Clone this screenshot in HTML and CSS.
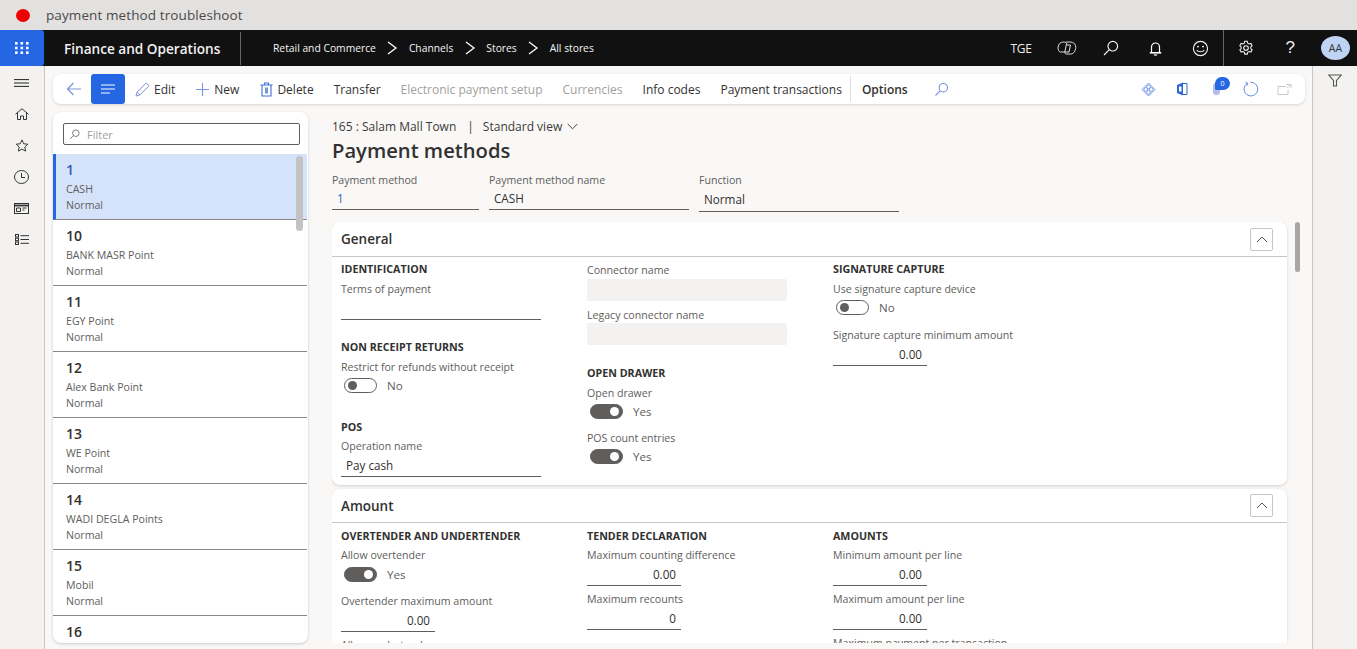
FILE: index.html
```html
<!DOCTYPE html>
<html lang="en">
<head>
<meta charset="utf-8">
<title>Payment methods</title>
<link rel="stylesheet" href="styles.css">
</head>
<body>
<div class="page">
  <div class="tabbar"><span class="dot"></span><span class="tabtitle">payment method troubleshoot</span></div>
  <header class="nav">
    <div class="waffle">
      <svg width="16" height="14" viewBox="0 0 16 14" fill="#fff"><rect x="1" y="1" width="2.6" height="2.6"/><rect x="6.5" y="1" width="2.6" height="2.6"/><rect x="12" y="1" width="2.6" height="2.6"/><rect x="1" y="5.7" width="2.6" height="2.6"/><rect x="6.5" y="5.7" width="2.6" height="2.6"/><rect x="12" y="5.7" width="2.6" height="2.6"/><rect x="1" y="10.4" width="2.6" height="2.6"/><rect x="6.5" y="10.4" width="2.6" height="2.6"/><rect x="12" y="10.4" width="2.6" height="2.6"/></svg>
    </div>
    <div class="brand">Finance and Operations</div>
    <nav class="crumbs">
      <span>Retail and Commerce</span>
      <svg class="chev" width="12" height="14" viewBox="0 0 12 14"><path d="M2 1l8 6-8 6" fill="none" stroke="#fff" stroke-width="1.300"/></svg>
      <span>Channels</span>
      <svg class="chev" width="12" height="14" viewBox="0 0 12 14"><path d="M2 1l8 6-8 6" fill="none" stroke="#fff" stroke-width="1.300"/></svg>
      <span>Stores</span>
      <svg class="chev" width="12" height="14" viewBox="0 0 12 14"><path d="M2 1l8 6-8 6" fill="none" stroke="#fff" stroke-width="1.300"/></svg>
      <span>All stores</span>
    </nav>
    <div class="navright">
      <span class="company">TGE</span>
      <span class="navicon"><svg width="20" height="14" viewBox="0 0 20 14" fill="none" stroke="#e0e0e0" stroke-width="1"><path d="M6.500 1C3.500 1 1.500 3 1.100 6c-.3 2.500.6 5 2.400 5h4.300L9.500 3c.3-1.200-1-2-3-2z"/><path d="M9 1h4.500c3 0 5.500 2.500 5.300 5.500-.2 3-2 6.500-5 6.500H9.500c-1.300 0-1.900-.8-1.700-2"/><path d="M9.500 4h4l-1.500 7H7.800"/></svg></span>
      <span class="navicon"><svg width="16" height="16" viewBox="0 0 16 16" fill="none" stroke="#f2f2f2" stroke-width="1.200"><circle cx="9.800" cy="6.200" r="4.800"/><path d="M6.300 9.700L1 15"/></svg></span>
      <span class="navicon"><svg width="13" height="15" viewBox="0 0 13 15" fill="none" stroke="#fff" stroke-width="1.200"><path d="M2.500 11.500V6a4 4 0 0 1 8 0v5.500"/><path d="M.8 11.800h11.400" stroke-width="1.600"/><path d="M5 13.500c.4.800 2.600.8 3 0"/></svg></span>
      <span class="navicon"><svg width="17" height="17" viewBox="0 0 18 18" fill="none" stroke="#f2f2f2" stroke-width="1.200"><circle cx="9" cy="9" r="7.500"/><circle cx="6.300" cy="7" r="1" fill="#f2f2f2" stroke="none"/><circle cx="11.700" cy="7" r="1" fill="#f2f2f2" stroke="none"/><path d="M5 10.500c1.500 2.600 6.500 2.600 8 0"/></svg></span>
      <span class="navsep"></span>
      <span class="navicon"><svg width="16" height="16" viewBox="0 0 18 18" fill="none" stroke="#f2f2f2" stroke-width="1.200"><path d="M7.600 1.500h2.800l.5 2.100 1.600.9 2-.6 1.400 2.400-1.500 1.500v1.800l1.500 1.500-1.400 2.400-2-.6-1.600.9-.5 2.100H7.600l-.5-2.100-1.600-.9-2 .6-1.400-2.400 1.500-1.500V8.200L2.100 6.300l1.400-2.400 2 .6 1.600-.9z"/><circle cx="9" cy="9" r="2.600"/></svg></span>
      <span class="navicon help">?</span>
      <span class="avatar">AA</span>
    </div>
  </header>
  <div class="body">
    <aside class="rail">
      <span class="slot"><svg width="15" height="8" viewBox="0 0 15 8" stroke="#222" stroke-width="1"><path d="M0 .6h15M0 4h15M0 7.400h15"/></svg></span>
      <span class="slot"><svg width="14" height="12" viewBox="0 0 14 12" fill="none" stroke="#333" stroke-width="1"><path d="M.5 6.300L7 .7l6.500 5.600"/><path d="M2.500 5v6.500h3V8h3v3.500h3V5"/></svg></span>
      <span class="slot"><svg width="14" height="13" viewBox="0 0 16 15" fill="none" stroke="#333" stroke-width="1.100"><path d="M8 1l2 4.500 4.700.5-3.500 3.200 1 4.800L8 11.600l-4.200 2.400 1-4.800L1.300 6 6 5.500z"/></svg></span>
      <span class="slot"><svg width="15" height="14" viewBox="0 0 15 14" fill="none" stroke="#333" stroke-width="1"><ellipse cx="7.500" cy="7" rx="7" ry="6.500"/><path d="M7.500 3v4.500h3.500"/></svg></span>
      <span class="slot"><svg width="15" height="11" viewBox="0 0 15 11" fill="none" stroke="#333" stroke-width="1"><rect x=".5" y=".5" width="14" height="10"/><path d="M.5 2.500h14" stroke-width="1.800"/><path d="M2.500 5h4v3.500h-4zM8.500 5h4M8.500 7h2"/></svg></span>
      <span class="slot"><svg width="14" height="11" viewBox="0 0 14 11" fill="none" stroke="#333" stroke-width="1"><rect x=".5" y=".5" width="3" height="2.500"/><rect x=".5" y="4.200" width="3" height="2.500"/><rect x=".5" y="8" width="3" height="2.500"/><path d="M5.500 1.700H14M5.500 5.500H14M5.500 9.300H14"/></svg></span>
    </aside>
    <main class="workspace">
      <div class="toolbar">
        <span class="tool back"><svg width="16" height="14" viewBox="0 0 16 14" fill="none" stroke="#7b93d8" stroke-width="1.200"><path d="M15 7H1.500M7.500 1L1.500 7l6 6"/></svg></span>
        <span class="listbtn"><svg width="16" height="10" viewBox="0 0 16 10" stroke="#fff" stroke-width="1.200"><path d="M1 1h14M1 5h14M1 9h9"/></svg></span>
        <span class="tool"><svg width="15" height="15" viewBox="0 0 15 15" fill="none" stroke="#7b93d8" stroke-width="1"><path d="M1 14l1-3.800L11.200 1l2.800 2.800L4.800 13z"/><path d="M2 10.200L4.800 13"/></svg>Edit</span>
        <span class="tool new"><svg width="15" height="15" viewBox="0 0 15 15" stroke="#7b93d8" stroke-width="1.100"><path d="M7.500 1v13M1 7.500h13"/></svg>New</span>
        <span class="tool"><svg width="13" height="15" viewBox="0 0 13 15" fill="none" stroke="#3f6fd8" stroke-width="1.100"><path d="M2 3.500V14h9V3.500M.5 3h12M4.500 3V1h4v2"/><rect x="5" y="5.500" width="3" height="6" fill="#7b93d8" stroke="none"/></svg>Delete</span>
        <span class="tool">Transfer</span>
        <span class="tool off">Electronic payment setup</span>
        <span class="tool off">Currencies</span>
        <span class="tool">Info codes</span>
        <span class="tool">Payment transactions</span>
        <span class="toolsep"></span>
        <span class="tool options">Options</span>
        <span class="tool"><svg width="15" height="15" viewBox="0 0 15 15" fill="none" stroke="#7b93d8" stroke-width="1.100"><circle cx="9.300" cy="5.700" r="4.200"/><path d="M6.300 8.700L1.500 13.500"/></svg></span>
        <div class="toolright">
          <svg width="15" height="15" viewBox="0 0 15 15" fill="none" stroke="#6f92e4" stroke-width=".9"><path d="M7.500 1l6.500 6.500L7.500 14 1 7.500z"/><circle cx="7.500" cy="4.800" r="1.900" fill="#fff"/><circle cx="7.500" cy="10.200" r="1.900" fill="#fff"/><circle cx="4.800" cy="7.500" r="1.900" fill="#fff"/><circle cx="10.200" cy="7.500" r="1.900" fill="#fff"/></svg>
          <svg width="12" height="14" viewBox="0 0 12 14"><path d="M1 3l6-2.500v13L1 11z" fill="#2f66d0"/><path d="M7 1.500h4v11H7" fill="none" stroke="#2f66d0"/><path d="M3 4.500h2.500v5H3z" fill="#fff"/></svg>
          <span class="attach"><svg width="10" height="14" viewBox="0 0 10 14"><rect x="1" y="1" width="7" height="12" rx="3" fill="#b5bdea"/></svg><span class="badge">0</span></span>
          <svg class="refresh" width="16" height="16" viewBox="0 0 16 16" fill="none" stroke="#5f86e2" stroke-width="1"><path d="M4.500 2.200a6.800 6.800 0 1 0 3-.9"/><path d="M2.500 1.200l2.300 1.200-1 2.200"/></svg>
          <svg class="popout" width="15" height="13" viewBox="0 0 15 13" fill="none" stroke="#c8c8c8" stroke-width="1"><path d="M9 3.500H1v8h10V7M9.500 1.500H14V5M14 1.500L10 5"/></svg>
        </div>
      </div>
      <div class="split">
        <section class="listpanel">
          <div class="filterwrap">
            <div class="filter"><svg width="11" height="11" viewBox="0 0 15 15" fill="none" stroke="#777" stroke-width="1.300"><circle cx="9.300" cy="5.700" r="4.500"/><path d="M6 9L1.500 13.500"/></svg><span>Filter</span></div>
          </div>
          <div class="items">
            <div class="item active"><div class="num">1</div><div class="sub">CASH</div><div class="sub">Normal</div></div>
            <div class="item"><div class="num">10</div><div class="sub">BANK MASR Point</div><div class="sub">Normal</div></div>
            <div class="item"><div class="num">11</div><div class="sub">EGY Point</div><div class="sub">Normal</div></div>
            <div class="item"><div class="num">12</div><div class="sub">Alex Bank Point</div><div class="sub">Normal</div></div>
            <div class="item"><div class="num">13</div><div class="sub">WE Point</div><div class="sub">Normal</div></div>
            <div class="item"><div class="num">14</div><div class="sub">WADI DEGLA Points</div><div class="sub">Normal</div></div>
            <div class="item"><div class="num">15</div><div class="sub">Mobil</div><div class="sub">Normal</div></div>
            <div class="item"><div class="num">16</div></div>
          </div>
          <div class="listthumb"></div>
        </section>
        <section class="detail">
          <div class="viewline"><span>165 : Salam Mall Town</span><span class="pipe">|</span><span>Standard view</span><svg width="11" height="7" viewBox="0 0 11 7" fill="none" stroke="#444" stroke-width="1"><path d="M.7 1l4.800 4.800L10.300 1"/></svg></div>
          <h1 class="title">Payment methods</h1>
          <div class="headfields">
            <div class="hf w148"><div class="lbl">Payment method</div><div class="inp short link">1</div></div>
            <div class="hf w200"><div class="lbl">Payment method name</div><div class="inp short">CASH</div></div>
            <div class="hf w200"><div class="lbl">Function</div><div class="inp fn">Normal</div></div>
          </div>
          <div class="scroller">
            <article class="card general">
              <div class="cardhead"><span>General</span><span class="collapse"><svg width="12" height="7" viewBox="0 0 12 7" fill="none" stroke="#555" stroke-width="1"><path d="M1 6l5-5 5 5"/></svg></span></div>
              <div class="cols">
                <div class="col">
                  <div class="sect">IDENTIFICATION</div>
                  <div class="lbl m4">Terms of payment</div>
                  <div class="inp wide"></div>
                  <div class="sect m19">NON RECEIPT RETURNS</div>
                  <div class="lbl m4">Restrict for refunds without receipt</div>
                  <div class="toggle"><span class="sw"></span>No</div>
                  <div class="sect m24">POS</div>
                  <div class="lbl m3">Operation name</div>
                  <div class="inp wide">Pay cash</div>
                </div>
                <div class="col">
                  <div class="lbl m1">Connector name</div>
                  <div class="ro m1"></div>
                  <div class="lbl m6">Legacy connector name</div>
                  <div class="ro"></div>
                  <div class="sect m20">OPEN DRAWER</div>
                  <div class="lbl m4">Open drawer</div>
                  <div class="toggle"><span class="sw on"></span>Yes</div>
                  <div class="lbl m9">POS count entries</div>
                  <div class="toggle"><span class="sw on"></span>Yes</div>
                </div>
                <div class="col">
                  <div class="sect">SIGNATURE CAPTURE</div>
                  <div class="lbl m4">Use signature capture device</div>
                  <div class="toggle"><span class="sw"></span>No</div>
                  <div class="lbl m10">Signature capture minimum amount</div>
                  <div class="inp numb">0.00</div>
                </div>
              </div>
            </article>
            <article class="card amount">
              <div class="cardhead"><span>Amount</span><span class="collapse"><svg width="12" height="7" viewBox="0 0 12 7" fill="none" stroke="#555" stroke-width="1"><path d="M1 6l5-5 5 5"/></svg></span></div>
              <div class="cols">
                <div class="col">
                  <div class="sect">OVERTENDER AND UNDERTENDER</div>
                  <div class="lbl m3">Allow overtender</div>
                  <div class="toggle t1"><span class="sw on"></span>Yes</div>
                  <div class="lbl m9">Overtender maximum amount</div>
                  <div class="inp numb">0.00</div>
                  <div class="lbl m5">Allow undertender</div>
                </div>
                <div class="col">
                  <div class="sect">TENDER DECLARATION</div>
                  <div class="lbl m3">Maximum counting difference</div>
                  <div class="inp numb">0.00</div>
                  <div class="lbl m5">Maximum recounts</div>
                  <div class="inp numb">0</div>
                </div>
                <div class="col">
                  <div class="sect">AMOUNTS</div>
                  <div class="lbl m3">Minimum amount per line</div>
                  <div class="inp numb">0.00</div>
                  <div class="lbl m5">Maximum amount per line</div>
                  <div class="inp numb">0.00</div>
                  <div class="lbl m5">Maximum payment per transaction</div>
                </div>
              </div>
            </article>
            <div class="vthumb"></div>
          </div>
        </section>
      </div>
    </main>
    <aside class="filterrail"><svg width="14" height="13" viewBox="0 0 14 13" fill="none" stroke="#555" stroke-width="1.100"><path d="M.8 1h12.400L8.500 6.500V12h-3V6.500z"/></svg></aside>
  </div>
</div>
</body>
</html>
```
FILE: styles.css
```css
* { box-sizing: border-box; }
html, body { margin: 0; height: 100%; overflow: hidden; }
body { font-family: "Open Sans", "Noto Sans", sans-serif; color: #323130; background: #f9f8f7; }
.page { height: 649px; display: flex; flex-direction: column; }

.tabbar { height: 30px; background: #e2e1e0; display: flex; align-items: center; padding-left: 16px; flex: none; }
.dot { width: 14px; height: 13px; border-radius: 50%; background: #ee0000; }
.tabtitle { margin-left: 16px; font-size: 13.5px; letter-spacing: .1px; color: #4a4a4a; }

.nav { height: 36px; background: #111; color: #fff; display: flex; align-items: center; flex: none; }
.waffle { width: 44px; height: 36px; background: #2566e3; border-radius: 0 3px 3px 0; display: flex; align-items: center; justify-content: center; }
.brand { margin-left: 20px; width: 177px; height: 33px; line-height: 33px; font-size: 13.6px; font-weight: 600; border-right: 1px solid #666; color: #f2f2f2; white-space: nowrap; }
.crumbs { margin-left: 32px; display: flex; align-items: center; font-size: 10.3px; color: #f5f5f5; white-space: nowrap; }
.chev { margin: 0 10.5px; }
.navright { margin-left: auto; display: flex; align-items: center; height: 36px; }
.company { font-size: 12px; letter-spacing: -.3px; width: 23px; margin-right: 11px; color: #eee; white-space: nowrap; }
.navicon { width: 44.5px; display: flex; justify-content: center; align-items: center; }
.navsep { width: 1px; height: 36px; background: #666; }
.help { font-size: 17px; font-family: "Liberation Sans", sans-serif; color: #eee; }
.avatar { width: 29px; height: 24px; border-radius: 50%; background: #bfd3f5; color: #333; font-size: 10.5px; display: flex; align-items: center; justify-content: center; margin: 0 7px 0 8.5px; }

.body { flex: 1; display: flex; min-height: 0; }
.rail { width: 45px; background: #f3f2f1; border-right: 1px solid #c8c6c4; flex: none; display: flex; flex-direction: column; align-items: center; padding: 1px 1px 0 0; }
.slot { height: 31.4px; display: flex; align-items: center; justify-content: center; flex: none; }
.workspace { flex: 1; min-width: 0; padding: 8px 7px 6px 8px; display: flex; flex-direction: column; }
.filterrail { width: 45px; background: #f3f2f1; border-left: 1px solid #c8c6c4; flex: none; display: flex; justify-content: center; padding-top: 8px; }

.toolbar { height: 30px; background: #fff; border-radius: 8px; box-shadow: 0 1px 3px rgba(0,0,0,.14); display: flex; align-items: center; font-size: 12px; color: #323130; white-space: nowrap; flex: none; }
.tool { display: flex; align-items: center; gap: 4px; margin-right: 20px; }
.back { margin: 0 9px 0 13px; }
.listbtn { width: 34px; height: 30px; background: #2566e3; border-radius: 3px; display: flex; align-items: center; justify-content: center; margin-right: 10px; }
.new { margin-right: 21px; }
.off { color: #a19f9d; }
.toolsep { width: 1px; height: 26px; background: #e1dfdd; margin: 0 11px 0 -12px; }
.options { font-weight: 600; margin-right: 26px; }
.toolright { margin-left: auto; display: flex; align-items: center; gap: 20px; padding-right: 13px; }
.attach { position: relative; display: flex; margin-left: 4px; }
.refresh { margin-left: 1px; }
.popout { margin-left: -2px; }
.badge { position: absolute; left: 3px; top: -5px; width: 15px; height: 13px; border-radius: 7px 7px 7px 2px; background: #2566e3; color: #fff; font-size: 7px; display: flex; align-items: center; justify-content: center; }

.split { flex: 1; min-height: 0; display: flex; margin-top: 8px; }
.listpanel { width: 255px; background: #fff; border-radius: 8px; box-shadow: 0 1px 3px rgba(0,0,0,.18); position: relative; overflow: hidden; flex: none; display: flex; flex-direction: column; }
.filterwrap { padding: 11px 8px 9px 10px; flex: none; }
.filter { height: 22px; border: 1px solid #605e5c; border-radius: 2px; display: flex; align-items: center; padding-left: 5px; gap: 7px; font-size: 11px; color: #a19f9d; }
.items { flex: 1; min-height: 0; overflow: hidden; margin-right: 1px; }
.item { height: 66px; padding: 6px 0 0 13px; border-bottom: 1px solid #8a8886; }
.item.active { background: #d5e3fa; border-left: 3px solid #2566e3; padding-left: 10px; }
.active .num { color: #2f5fb3; }
.num { font-size: 14px; font-weight: 600; line-height: 19px; color: #323130; }
.sub { font-size: 10.6px; line-height: 16px; color: #605e5c; }
.num + .sub { margin-top: 2px; }
.listthumb { position: absolute; right: 5px; top: 44px; width: 7px; height: 75px; background: #c4c3c2; border-radius: 4px; }

.detail { flex: 1; min-width: 0; margin-left: 24px; display: flex; flex-direction: column; }
.viewline { display: flex; align-items: center; height: 16px; margin-top: 6px; font-size: 12px; color: #3b3a39; white-space: nowrap; }
.viewline svg { margin-left: 5px; }
.pipe { margin: 0 9px 0 11px; }
.title { margin: 3px 0 0; font-size: 20.2px; line-height: 26px; font-weight: 600; color: #323130; }
.headfields { display: flex; margin-top: 9px; }
.hf { margin-right: 10px; }
.w148 { width: 147px; }
.w200 { width: 200px; }
.lbl { font-size: 10.6px; line-height: 16px; height: 16px; color: #605e5c; white-space: nowrap; }
.inp { height: 23px; line-height: 22px; border-bottom: 1px solid #605e5c; font-size: 11.7px; padding-left: 5px; color: #323130; }
.short { height: 22px; line-height: 21px; }
.link { color: #2f5fb3; }
.fn { margin-bottom: -2px; height: 24px; }
.wide { width: 200px; }
.numb { width: 94px; text-align: right; padding: 0 5px 0 0; }
.ro { width: 200px; height: 22px; background: #f3f2f1; border-radius: 2px; }

.scroller { flex: 1; min-height: 0; overflow: hidden; margin-top: 12px; position: relative; }
.card { width: 955px; background: #fff; border-radius: 8px; box-shadow: 0 1px 3px rgba(0,0,0,.16); margin: 0 0 4px 0; }
.general { height: 263px; }
.amount { height: 300px; }
.cardhead { height: 35px; border-bottom: 1px solid #c8c6c4; display: flex; align-items: center; justify-content: space-between; padding: 0 14px 0 9px; font-size: 13.5px; font-weight: 600; color: #323130; }
.amount .cardhead { height: 34px; }
.collapse { width: 23px; height: 23px; border: 1px solid #c8c6c4; border-radius: 2px; display: flex; align-items: center; justify-content: center; background: #fff; }
.cols { display: flex; padding: 4px 0 0 9px; }
.amount .cols { padding-top: 5px; }
.col { width: 246px; display: flex; flex-direction: column; }
.sect { font-size: 10.7px; line-height: 16px; height: 16px; font-weight: 700; color: #323130; white-space: nowrap; }
.toggle { height: 20px; display: flex; align-items: center; font-size: 11.6px; color: #605e5c; padding-left: 3px; }
.sw { width: 33px; height: 15px; border: 1px solid #605e5c; border-radius: 8px; margin-right: 10px; position: relative; background: #fff; }
.sw::after { content: ""; position: absolute; left: 3px; top: 2px; width: 9px; height: 9px; border-radius: 50%; background: #605e5c; }
.sw.on { background: #605e5c; }
.sw.on::after { left: auto; right: 3px; background: #fff; }
.t1 { margin-top: 1px; }
.m1 { margin-top: 1px; }
.m3 { margin-top: 3px; }
.m4 { margin-top: 4px; }
.m5 { margin-top: 5px; }
.m6 { margin-top: 6px; }
.m9 { margin-top: 9px; }
.m10 { margin-top: 10px; }
.m19 { margin-top: 19px; }
.m20 { margin-top: 20px; }
.m24 { margin-top: 24px; }
.vthumb { position: absolute; left: 963px; top: 0; width: 5px; height: 50px; background: #a8a7a6; border-radius: 3px; }
```
